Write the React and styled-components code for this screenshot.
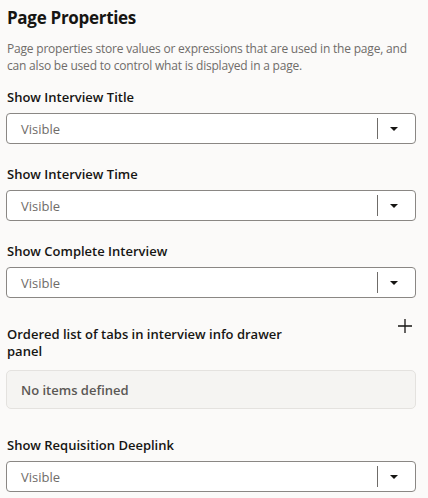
import React from 'react';
import styled, { createGlobalStyle } from 'styled-components';

const GlobalStyle = createGlobalStyle`
  html, body {
    margin: 0;
    padding: 0;
    background: #fbfaf9;
  }
  body {
    font-family: "Open Sans", "Noto Sans", sans-serif;
    color: #161513;
  }
`;

const Panel = styled.div`
  width: 428px;
  box-sizing: border-box;
  padding: 4px 12px 0 6px;
  display: flex;
  flex-direction: column;
`;

const Title = styled.h1`
  margin: 0 0 0 1px;
  font-size: 17px;
  font-weight: 700;
  letter-spacing: -0.3px;
  line-height: 28px;
`;

const Description = styled.p`
  margin: 8px 0 0 1px;
  font-size: 12px;
  line-height: 17px;
  letter-spacing: -0.2px;
  color: #6f6c69;
`;

const Field = styled.div`
  display: flex;
  flex-direction: column;
  margin-top: ${(p) => p.gap || 22}px;
`;

const LabelRow = styled.div`
  display: flex;
  align-items: flex-start;
  justify-content: space-between;
`;

const Label = styled.label`
  margin-left: 1px;
  font-size: 13px;
  font-weight: 600;
  line-height: 17px;
  color: #161513;
  max-width: ${(p) => p.maxWidth || 'none'};
`;

const SelectBox = styled.div`
  margin-top: 7px;
  height: 31px;
  box-sizing: border-box;
  border: 1px solid #8a8784;
  border-radius: 4px;
  background: #ffffff;
  display: flex;
  align-items: center;
`;

const Value = styled.span`
  flex: 1;
  padding-left: 14px;
  font-size: 13px;
  color: #6f6c69;
`;

const Divider = styled.span`
  width: 1px;
  height: 21px;
  background: #6f6c69;
`;

const Caret = styled.span`
  width: 32px;
  margin-right: 5px;
  display: flex;
  justify-content: center;
  align-items: center;
`;

const AddButton = styled.button`
  border: none;
  background: transparent;
  padding: 0;
  margin: -8px 3px 0 0;
  width: 16px;
  height: 16px;
  display: flex;
  align-items: center;
  justify-content: center;
  cursor: pointer;
`;

const EmptyBox = styled.div`
  margin-top: 10px;
  height: 39px;
  box-sizing: border-box;
  border: 1px solid #e4e2df;
  border-radius: 5px;
  background: #f5f4f2;
  display: flex;
  align-items: center;
  padding-left: 14px;
  font-size: 13px;
  font-weight: 600;
  color: #5b5855;
`;

function Select({ value }) {
  return (
    <SelectBox>
      <Value>{value}</Value>
      <Divider />
      <Caret>
        <svg width="8" height="4" viewBox="0 0 8 4">
          <path d="M0 0h8L4 4z" fill="#161513" />
        </svg>
      </Caret>
    </SelectBox>
  );
}

const fields = [
  { label: 'Show Interview Title', gap: 15 },
  { label: 'Show Interview Time' },
  { label: 'Show Complete Interview' },
];

export default function App() {
  return (
    <>
      <GlobalStyle />
      <Panel>
        <Title>Page Properties</Title>
        <Description>
          Page properties store values or expressions that are used in the page, and
          can also be used to control what is displayed in a page.
        </Description>
        {fields.map((f) => (
          <Field key={f.label} gap={f.gap}>
            <Label>{f.label}</Label>
            <Select value="Visible" />
          </Field>
        ))}
        <Field gap={28}>
          <LabelRow>
            <Label maxWidth="290px">Ordered list of tabs in interview info drawer panel</Label>
            <AddButton aria-label="Add">
              <svg width="16" height="16" viewBox="0 0 16 16">
                <path d="M8 1v14M1 8h14" stroke="#161513" strokeWidth="1.3" />
              </svg>
            </AddButton>
          </LabelRow>
          <EmptyBox>No items defined</EmptyBox>
        </Field>
        <Field gap={28}>
          <Label>Show Requisition Deeplink</Label>
          <Select value="Visible" />
        </Field>
      </Panel>
    </>
  );
}
